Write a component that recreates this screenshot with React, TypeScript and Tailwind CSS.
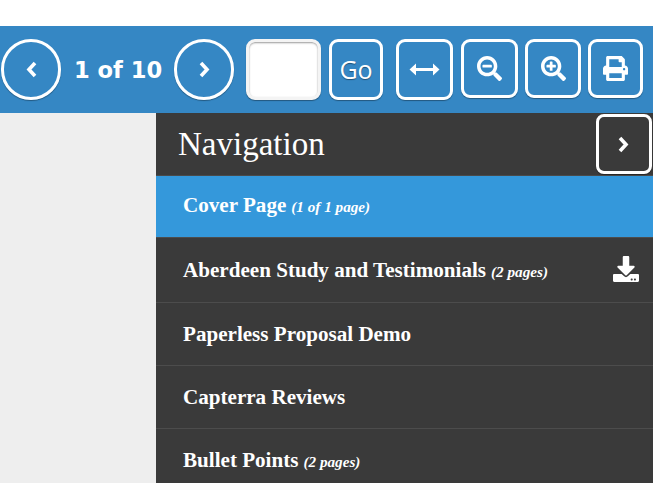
import { FaDownload, FaPrint, FaSearchMinus, FaSearchPlus } from 'react-icons/fa'

const rows = [
  { title: 'Cover Page', note: '(1 of 1 page)', active: true, height: 'h-[62px] pb-[3px]' },
  { title: 'Aberdeen Study and Testimonials', note: '(2 pages)', download: true, height: 'h-[65px]' },
  { title: 'Paperless Proposal Demo', height: 'h-[63px]' },
  { title: 'Capterra Reviews', height: 'h-[63px]' },
  { title: 'Bullet Points', note: '(2 pages)', height: 'h-[63px]' },
]

const squareBtn = 'flex items-center justify-center rounded-[9px] border-[3px] border-white text-white shadow-[0_1px_1px_rgba(0,0,0,0.35)]'

function Chevron({ left = false }: { left?: boolean }) {
  return (
    <svg width="11" height="17" viewBox="0 0 11 17" fill="none" stroke="currentColor" strokeWidth="3.6">
      <path d={left ? 'M9 2 L3 8.5 L9 15' : 'M2 2 L8 8.5 L2 15'} />
    </svg>
  )
}

export default function App() {
  return (
    <div className="h-[483px] w-[653px] overflow-hidden bg-white">
      {/* Toolbar */}
      <div className="mt-[26px] flex h-[87px] items-start bg-[#3587c4] pl-px pt-[13px] [font-family:'Open_Sans',sans-serif]">
        <button className="flex h-[61px] w-[60px] items-center justify-center rounded-full border-[3px] border-white text-white shadow-[0_1px_1px_rgba(0,0,0,0.35)]">
          <Chevron left />
        </button>
        <span className="ml-[13px] w-[88px] whitespace-nowrap pt-px text-[22.6px] font-bold leading-[61px] text-white [font-family:'DejaVu_Sans',sans-serif]">
          1 of 10
        </span>
        <button className="ml-[12px] flex h-[61px] w-[60px] items-center justify-center rounded-full border-[3px] border-white text-white shadow-[0_1px_1px_rgba(0,0,0,0.35)]">
          <Chevron />
        </button>
        <div className="ml-[12px] h-[61px] w-[75px] rounded-[9px] border-[3px] border-[#f4f4f4] bg-white shadow-[inset_0_1px_2px_rgba(0,0,0,0.4),0_1px_1px_rgba(0,0,0,0.35)]" />
        <button className={`ml-[8px] h-[61px] w-[54px] text-[25px] font-medium [text-shadow:0_1px_1px_rgba(0,0,0,0.4)] ${squareBtn}`}>Go</button>
        <button className={`ml-[13px] h-[61px] w-[57px] ${squareBtn}`}>
          <svg width="31" height="13" viewBox="0 0 31 13" fill="currentColor">
            <path d="M0.5 6.5 L7 0.5 V5 H24 V0.5 L30.5 6.5 L24 12.5 V8 H7 V12.5 Z" />
          </svg>
        </button>
        <button className={`ml-[8px] h-[59px] w-[57px] ${squareBtn}`}>
          <FaSearchMinus size={25} />
        </button>
        <button className={`ml-[7px] h-[59px] w-[56px] ${squareBtn}`}>
          <FaSearchPlus size={25} />
        </button>
        <button className={`ml-[7px] h-[59px] w-[55px] ${squareBtn}`}>
          <FaPrint size={25} />
        </button>
      </div>

      <div className="flex">
        <div className="h-[370px] w-[156px] bg-[#eeeeee]" />
        {/* Navigation panel */}
        <div className="h-[370px] flex-1 overflow-hidden bg-[#3a3a3a] text-white [font-family:'Liberation_Serif',serif]">
          <div className="flex h-[63px] items-start justify-between border-b border-[#4a4a4a] pl-[22px] pr-px pt-px">
            <span className="text-[33px] leading-[60px]">Navigation</span>
            <button className="flex h-[60px] w-[56px] items-center justify-center rounded-[8px] border-[3px] border-white pr-[2px] shadow-[0_1px_1px_rgba(0,0,0,0.35)]">
              <Chevron />
            </button>
          </div>
          {rows.map((row) => (
            <div
              key={row.title}
              className={`flex items-center justify-between border-b border-[#4c4c4c] pl-[27px] pr-[14px] ${row.height} ${row.active ? 'bg-[#3498db]' : ''}`}
            >
              <span className="whitespace-nowrap pt-[2px] text-[21.1px] font-bold">
                {row.title}
                {row.note && <em className="ml-[5px] text-[15.2px]">{row.note}</em>}
              </span>
              {row.download && <FaDownload size={26} className="mb-[3px]" />}
            </div>
          ))}
        </div>
      </div>
    </div>
  )
}
